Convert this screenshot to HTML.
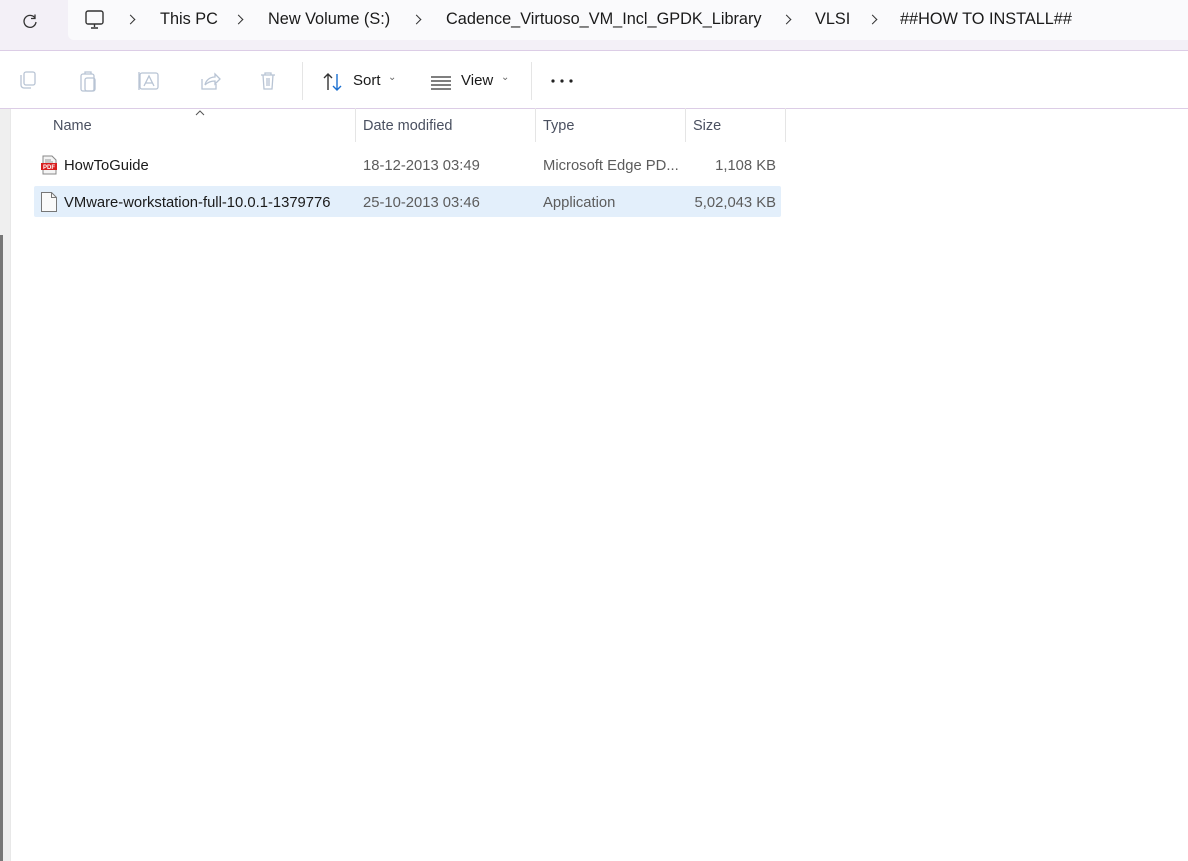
<!DOCTYPE html>
<html><head><style>
body{margin:0;width:1188px;height:861px;overflow:hidden;background:#fff;font-family:"Segoe UI","Liberation Sans",sans-serif;position:relative}
.a{position:absolute}
.top{left:0;top:0;width:1188px;height:50px;background:#f3f0f7;border-bottom:1px solid #dccde6}
.addr{left:68px;top:0;width:1120px;height:40px;background:#fafafc;border-radius:0 0 0 6px}
.t{position:absolute;font-size:16.3px;color:#1a1a1a;white-space:nowrap;top:10px}
.chev{position:absolute;top:16px;width:6px;height:6px;border-top:1.3px solid #333;border-right:1.3px solid #333;transform:rotate(45deg)}
.tb{left:0;top:51px;width:1188px;height:57px;background:#fff;border-bottom:1px solid #dccde6}
.tbt{position:absolute;font-size:15px;color:#1a1a1a}
.h{font-size:14.5px;color:#4a5060;top:118px}
.r{font-size:14.8px;color:#1a1a1a}
.g{color:#5c5c5c}
.sep{width:1px;height:34px;background:#e5e5e5;top:108px}
</style></head><body>
<div class="a top"></div>
<div class="a addr"></div>
<svg class="a" style="left:20px;top:11px" width="20" height="20" viewBox="0 0 20 20"><path d="M15 7 A6 6 0 1 0 16 11" fill="none" stroke="#333" stroke-width="1.3"/><path d="M15 3.5 V7.5 H11" fill="none" stroke="#333" stroke-width="1.3"/></svg>
<svg class="a" style="left:84px;top:9px" width="22" height="22" viewBox="0 0 22 22"><rect x="2" y="2" width="17" height="13" rx="2" fill="none" stroke="#333" stroke-width="1.4"/><path d="M10.5 15v3M7 19h7" stroke="#333" stroke-width="1.4"/></svg>
<span class="chev" style="left:127px"></span>
<span class="t" style="left:160px">This PC</span>
<span class="chev" style="left:235px"></span>
<span class="t" style="left:268px">New Volume (S:)</span>
<span class="chev" style="left:413px"></span>
<span class="t" style="left:446px">Cadence_Virtuoso_VM_Incl_GPDK_Library</span>
<span class="chev" style="left:783px"></span>
<span class="t" style="left:815px">VLSI</span>
<span class="chev" style="left:869px"></span>
<span class="t" style="left:900px">##HOW TO INSTALL##</span>
<div class="a tb"></div>
<svg class="a" style="left:15px;top:68px" width="270" height="26" viewBox="0 0 270 26" fill="none" stroke="#b8c4d4" stroke-width="1.3">
<rect x="9" y="4" width="11" height="13" rx="2"/><path d="M6 7v10a3 3 0 0 0 3 3h7"/>
<rect x="66" y="6" width="13" height="17" rx="2"/><rect x="70" y="10" width="10" height="13" rx="2"/><path d="M70 6v-2h6v2"/>
<rect x="125" y="5" width="18" height="16" rx="2"/><path d="M129 18l5-10 5 10M130.5 15h7M124 4v18"/>
<path d="M187 11v10h14v-5M190 17c1-5 5-8 10-8v-3l5 5-5 5v-3c-4 0-7 1-10 4"/>
<path d="M246 7h14M250 7V5h6v2M248 7l1 14h8l1-14M252 10v8M254 10v8"/>
</svg>
<div class="a" style="left:302px;top:62px;width:1px;height:38px;background:#e5e5e5"></div>
<div class="a" style="left:531px;top:62px;width:1px;height:38px;background:#e5e5e5"></div>
<svg class="a" style="left:322px;top:72px" width="24" height="20" viewBox="0 0 24 20" fill="none" stroke-width="1.4"><path d="M6 18V2M2 6l4-4 4 4" stroke="#333"/><path d="M15 2v16M11 14l4 4 4-4" stroke="#1a6fd0"/></svg>
<span class="tbt" style="left:353px;top:72px">Sort</span><span class="a" style="left:388px;top:72px;font-size:10px;color:#666">⌄</span>
<svg class="a" style="left:430px;top:74px" width="22" height="16" viewBox="0 0 22 16" stroke="#333" stroke-width="1.3"><path d="M1 3h20M1 7h20M1 11h20M1 15h20"/></svg>
<span class="tbt" style="left:461px;top:72px">View</span><span class="a" style="left:501px;top:72px;font-size:10px;color:#666">⌄</span>
<svg class="a" style="left:550px;top:78px" width="24" height="6"><circle cx="3" cy="3" r="1.6" fill="#222"/><circle cx="12" cy="3" r="1.6" fill="#222"/><circle cx="21" cy="3" r="1.6" fill="#222"/></svg>
<div class="a" style="left:0;top:109px;width:10px;height:752px;background:#efefef"></div>
<div class="a" style="left:10px;top:109px;width:1px;height:752px;background:#e8e8e8"></div>
<div class="a" style="left:0;top:235px;width:3px;height:626px;background:#777"></div>
<svg class="a" style="left:195px;top:110px" width="10" height="6"><path d="M1 5l4-4 4 4" fill="none" stroke="#555"/></svg>
<span class="a h" style="left:53px">Name</span>
<div class="a sep" style="left:355px"></div>
<span class="a h" style="left:363px">Date modified</span>
<div class="a sep" style="left:535px"></div>
<span class="a h" style="left:543px">Type</span>
<div class="a sep" style="left:685px"></div>
<span class="a h" style="left:693px">Size</span>
<div class="a sep" style="left:785px"></div>
<div class="a" style="left:34px;top:186px;width:747px;height:31px;background:#e3effb;border-radius:2px"></div>
<svg class="a" style="left:40px;top:155px" width="18" height="20" viewBox="0 0 18 20"><path d="M3 1h9l4 4v14H3z" fill="#f4f4f4" stroke="#888"/><path d="M5 5h6M5 7h8" stroke="#999"/><rect x="1" y="8" width="16" height="7" fill="#d81e1e"/><text x="9" y="14" font-size="6" font-family="Liberation Sans" fill="#fff" text-anchor="middle" font-weight="bold">PDF</text></svg>
<svg class="a" style="left:40px;top:191px" width="18" height="22" viewBox="0 0 18 22"><path d="M1.5 1.5h10l5 5v14h-15z" fill="#fafafa" stroke="#777"/><path d="M11.5 1.5v5h5" fill="none" stroke="#777"/></svg>
<span class="a r" style="left:64px;top:158px">HowToGuide</span>
<span class="a r g" style="left:363px;top:158px">18-12-2013 03:49</span>
<span class="a r g" style="left:543px;top:158px">Microsoft Edge PD...</span>
<span class="a r g" style="left:680px;top:158px;width:96px;text-align:right">1,108 KB</span>
<span class="a r" style="left:64px;top:195px">VMware-workstation-full-10.0.1-1379776</span>
<span class="a r g" style="left:363px;top:195px">25-10-2013 03:46</span>
<span class="a r g" style="left:543px;top:195px">Application</span>
<span class="a r g" style="left:680px;top:195px;width:96px;text-align:right">5,02,043 KB</span>
</body></html>
